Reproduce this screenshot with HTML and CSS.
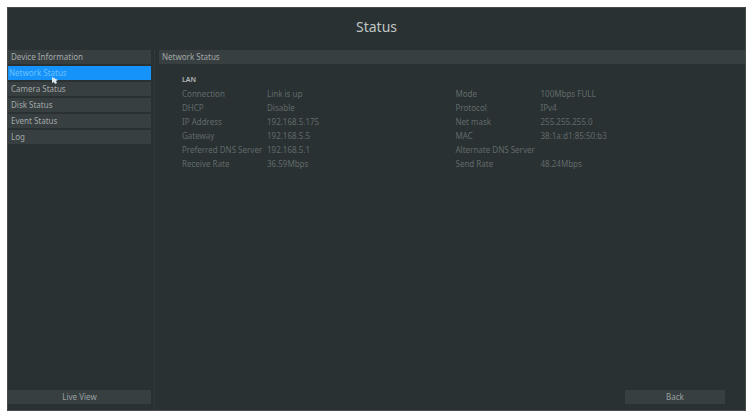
FILE: index.html
```html
<!DOCTYPE html>
<html lang="en">
<head>
  <meta charset="UTF-8">
  <title>Status</title>
  <link rel="stylesheet" href="styles.css">
</head>
<body>
  <div class="screen">
    <header class="title-bar">
      <h1>Status</h1>
    </header>

    <div class="content">
      <!-- Left menu -->
      <div class="sidebar">
        <nav class="menu">
          <a href="#device">Device Information</a>
          <a href="#network" class="active" aria-current="page">Network Status
            <svg class="pointer" viewBox="0 0 6 7"><path d="M0 0 L6 3 L4 4 L5 6 L3 7 L2 5 L0 6 Z"/></svg>
          </a>
          <a href="#camera">Camera Status</a>
          <a href="#disk">Disk Status</a>
          <a href="#event">Event Status</a>
          <a href="#log">Log</a>
        </nav>
        <button type="button" class="btn">Live View</button>
      </div>

      <!-- Network details -->
      <main class="panel">
        <h2>Network Status</h2>
        <section class="details">
          <h3>LAN</h3>
          <table>
            <colgroup>
              <col class="label"><col><col class="label"><col>
            </colgroup>
            <tr><th>Connection</th><td>Link is up</td><th>Mode</th><td>100Mbps FULL</td></tr>
            <tr><th>DHCP</th><td>Disable</td><th>Protocol</th><td>IPv4</td></tr>
            <tr><th>IP Address</th><td>192.168.5.175</th><th>Net mask</th><td>255.255.255.0</td></tr>
            <tr><th>Gateway</th><td>192.168.5.5</td><th>MAC</th><td>38:1a:d1:85:50:b3</td></tr>
            <tr><th>Preferred DNS Server</th><td>192.168.5.1</td><th>Alternate DNS Server</th><td></td></tr>
            <tr><th>Receive Rate</th><td>36.59Mbps</td><th>Send Rate</th><td>48.24Mbps</td></tr>
          </table>
        </section>
        <button type="button" class="btn back">Back</button>
      </main>
    </div>
  </div>
</body>
</html>
```
FILE: styles.css
```css
* {
  box-sizing: border-box;
}

body {
  margin: 0;
  padding: 7px 2px 1px 7px;
  background: #fff;
  font-family: "Noto Sans", sans-serif;
  font-size: 8px;
  line-height: 14px;
  color: #a3a8a8;
}

h1, h2, h3 {
  margin: 0;
  font-weight: normal;
}

.screen {
  display: flex;
  flex-direction: column;
  min-height: calc(100vh - 8px);
  background: #293132;
  border: 1px solid #454b4b;
}

.title-bar {
  padding: 8px 0 12px;
  text-align: center;
}

.title-bar h1 {
  font-size: 14px;
  line-height: 22px;
  color: #c0c5c5;
}

.content {
  display: flex;
  flex: 1;
}

.sidebar {
  display: flex;
  flex-direction: column;
  justify-content: space-between;
  width: 147px;
  padding: 0 3px 6px 0;
  border-right: 1px solid #313a3b;
}

.menu {
  display: flex;
  flex-direction: column;
  gap: 2px;
}

.menu a {
  position: relative;
  padding-left: 3px;
  background: #373f40;
  color: inherit;
  text-decoration: none;
}

.menu a.active {
  padding-left: 1px;
  background: #1593fa;
  color: #6cc0ff;
}

.pointer {
  position: absolute;
  left: 44px;
  top: 11px;
  width: 6px;
  height: 7px;
  fill: #dce9ef;
  z-index: 1;
}

.btn {
  height: 14px;
  padding: 0;
  border: 0;
  background: #373f40;
  color: #9aa0a0;
  font: inherit;
}

.panel {
  display: flex;
  flex: 1;
  flex-direction: column;
  padding: 0 0 6px 4px;
}

.panel h2 {
  padding-left: 3px;
  background: #373f40;
  font-size: 8px;
}

.details {
  flex: 1;
  padding: 9px 16px 0 23px;
}

.details h3 {
  font-size: 7px;
  font-weight: 600;
  color: #b5baba;
}

table {
  width: 100%;
  table-layout: fixed;
  border-collapse: collapse;
  font-size: 8px;
  color: #616a6b;
}

.label {
  width: 85px;
}

th, td {
  height: 14px;
  padding: 0;
  font-weight: normal;
  text-align: left;
  white-space: nowrap;
}

.back {
  align-self: flex-end;
  width: 100px;
  margin-right: 20px;
}
```
